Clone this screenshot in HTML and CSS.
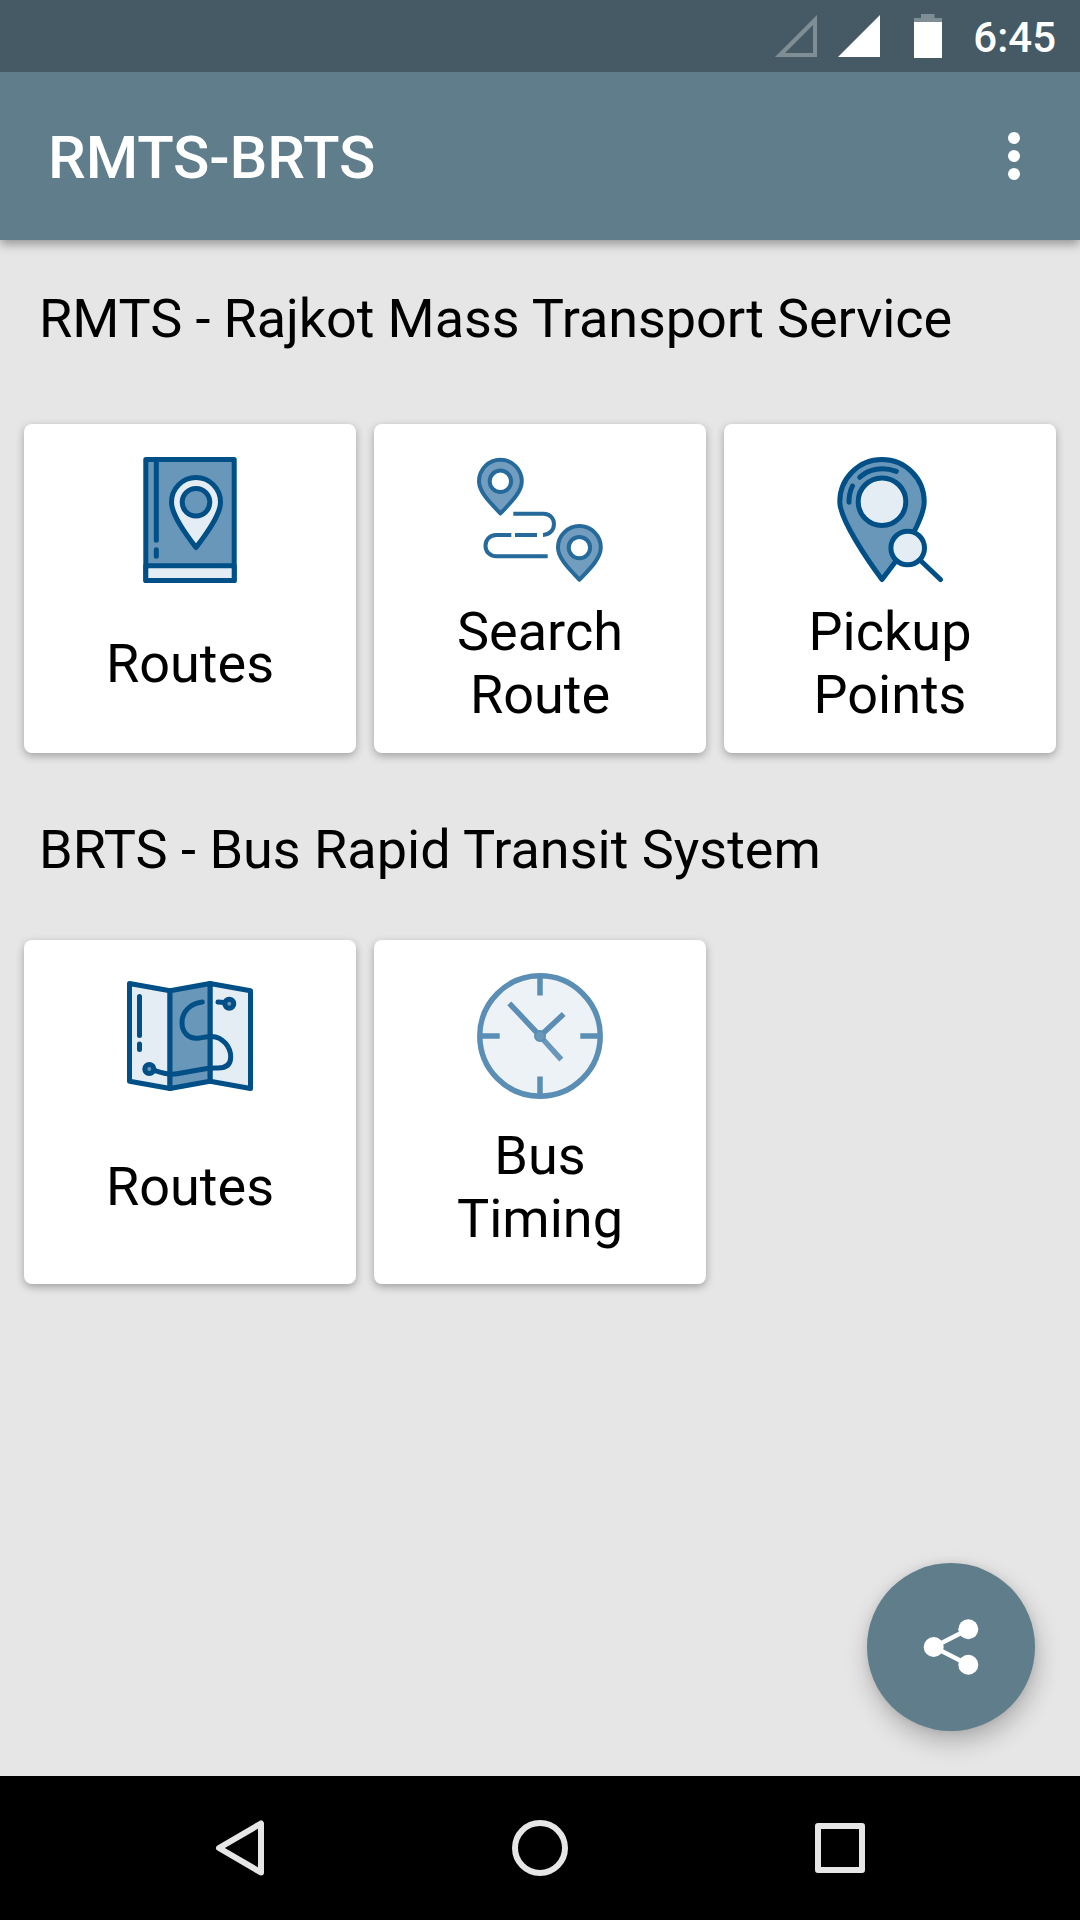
FILE: index.html
```html
<!DOCTYPE html>
<html lang="en">
<head>
    <meta charset="UTF-8">
    <meta name="viewport" content="width=device-width, initial-scale=1.0">
    <title>RMTS-BRTS</title>
    <link rel="stylesheet" href="styles.css">
</head>
<body>
    <div class="screen">
        <div class="status-bar">
            <svg class="signal" width="42" height="42" viewBox="0 0 42 42">
                <path d="M42 0V42H0ZM38 10L10 38H38Z" fill="#7f8e94" fill-rule="evenodd"/>
            </svg>
            <svg class="signal-full" width="42" height="42" viewBox="0 0 42 42">
                <path d="M42 0V42H0Z" fill="#fff"/>
            </svg>
            <svg class="battery" width="28" height="44" viewBox="0 0 28 44">
                <path d="M7 0H20.500V4H28V8H0V4H7Z" fill="#7f8e94"/>
                <path d="M0 8H28V44H0Z" fill="#fff"/>
            </svg>
            <span class="time">6:45</span>
        </div>

        <header class="app-bar">
            <h1>RMTS-BRTS</h1>
            <svg class="menu" width="12" height="48" viewBox="0 0 12 48">
                <g fill="#fff">
                    <circle cx="6" cy="6" r="6"/>
                    <circle cx="6" cy="24" r="6"/>
                    <circle cx="6" cy="42" r="6"/>
                </g>
            </svg>
        </header>

        <main class="content">
            <h2 class="rmts-title">RMTS - Rajkot Mass Transport Service</h2>
            <div class="cards rmts">
                <div class="card">
                    <!-- book with pin -->
                    <svg class="icon" viewBox="0 0 126 126" stroke="#004f87" stroke-width="5" stroke-linecap="round" stroke-linejoin="round">
                        <rect x="18.800" y="2.500" width="88.400" height="121" fill="#6997b9"/>
                        <rect x="18.800" y="108.700" width="88.400" height="14.800" fill="#e5edf4"/>
                        <path d="M29.300 3V83.200M29.300 92.800V99.200" fill="none"/>
                        <path d="M69 90.500C61 80 44.500 59 44.500 45.200A24.500 24.700 0 0 1 93.500 45.200C93.500 59 77 80 69 90.500Z" fill="#e5edf4"/>
                        <circle cx="69" cy="45.300" r="13.800" fill="#6997b9"/>
                    </svg>
                    <p>Routes</p>
                </div>
                <div class="card">
                    <!-- two pins joined by a road -->
                    <svg class="icon" viewBox="0 0 126 126" stroke="#256a9b" stroke-width="4" stroke-linejoin="round">
                        <path d="M23.400 56.500C17 49 2 36.500 2 24.200A21.400 21.400 0 0 1 44.800 24.200C44.800 36.500 30 49 23.400 56.500Z" fill="#739dbf"/>
                        <circle cx="23.400" cy="24.300" r="10.700" fill="#fff"/>
                        <path d="M102.400 122.800C96 115.300 81 102.800 81 90.500A21.400 21.400 0 0 1 123.800 90.500C123.800 102.800 109 115.300 102.400 122.800Z" fill="#739dbf"/>
                        <circle cx="102.400" cy="90.600" r="10.700" fill="#fff"/>
                        <path d="M36.300 56.700H66.500C80.500 56.700 80.500 77.500 66 78M60 78H38M34.300 78H19.500C4.800 78 4.800 99.300 19.500 99.300H70.700" fill="none"/>
                    </svg>
                    <p>Search<br>Route</p>
                </div>
                <div class="card">
                    <!-- pin with magnifier -->
                    <svg class="icon" viewBox="0 0 126 126" stroke="#004f87" stroke-width="5" stroke-linecap="round" stroke-linejoin="round">
                        <path d="M55 122.500C42 105 12.800 63 12.800 44.700A42.200 42.200 0 0 1 97.200 44.700C97.200 52 93.500 62 88 73L69 104Z" fill="#6997b9"/>
                        <circle cx="55" cy="44.700" r="23.800" fill="#e5edf4"/>
                        <path d="M32.700 20.300C42 11.500 56 9.500 69.300 14.300M25.500 29C23 34 21.900 39.500 22 45.200" fill="none"/>
                        <path d="M94 104L113.500 122.500" fill="none"/>
                        <circle cx="80.700" cy="91" r="16.800" fill="#e5edf4"/>
                    </svg>
                    <p>Pickup<br>Points</p>
                </div>
            </div>

            <h2>BRTS - Bus Rapid Transit System</h2>
            <div class="cards brts">
                <div class="card">
                    <!-- folded map -->
                    <svg class="icon" viewBox="0 0 126 126" stroke="#004f87" stroke-width="5" stroke-linecap="round" stroke-linejoin="round">
                        <path d="M2.500 10.500L43 17.700V115.500L2.500 108.300Z" fill="#e5edf4"/>
                        <path d="M83 10.500L123.500 17.700V115.500L83 108.300Z" fill="#e5edf4"/>
                        <path d="M43 17.700L83 10.500V108.300L43 115.500Z" fill="#6997b9"/>
                        <path d="M12.500 23.500V62.500M12.500 71V76.500" fill="none"/>
                        <path d="M75.300 29C63 30.500 55 39 55 49.500C55 59.500 61.500 66 71 65.200C76 64.800 79 63.300 84.500 63.500C96 64 103.700 74 103.700 84C103.700 91.500 99 95 91 95C87 95 85 94.700 80 95.500L50 100.800C42 102.200 36 100.500 28 97.700" fill="none"/>
                        <path d="M91 29L97 29.500" fill="none"/>
                        <circle cx="22.300" cy="96" r="4.500" fill="#6997b9"/>
                        <circle cx="102.300" cy="30.700" r="4.500" fill="#6997b9"/>
                    </svg>
                    <p>Routes</p>
                </div>
                <div class="card">
                    <!-- clock -->
                    <svg class="icon" viewBox="0 0 126 126" stroke="#5a8eb4" stroke-width="5.500" fill="none">
                        <circle cx="63" cy="63" r="60.200" fill="#edf2f7"/>
                        <path d="M63 3V22.500M63 103.500V123M3 63H22.700M103.300 63H123"/>
                        <path d="M32.300 30.300L63 63L86.700 41"/>
                        <path d="M63 63L84.300 86.700" stroke="#6997b9"/>
                        <circle cx="63" cy="63" r="5" fill="#6997b9" stroke-width="2"/>
                    </svg>
                    <p>Bus<br>Timing</p>
                </div>
            </div>

            <button class="fab" type="button" aria-label="Share">
                <svg width="56" height="56" viewBox="-28 -28 56 56">
                    <path d="M17.500 -17.700L-17.300 0L17.500 17.700" fill="none" stroke="#fff" stroke-width="4.500"/>
                    <g fill="#fff">
                        <circle cx="-17.300" cy="0" r="10"/>
                        <circle cx="17.300" cy="-17.700" r="10"/>
                        <circle cx="17.300" cy="17.700" r="10"/>
                    </g>
                </svg>
            </button>
        </main>

        <nav class="nav-bar">
            <svg width="56" height="56" viewBox="0 0 56 56">
                <path d="M49 3.500V52.500L7 28Z"/>
            </svg>
            <svg width="56" height="56" viewBox="0 0 56 56">
                <circle cx="28" cy="28" r="25"/>
            </svg>
            <svg width="56" height="56" viewBox="0 0 56 56">
                <rect x="6" y="6" width="44" height="44"/>
            </svg>
        </nav>
    </div>
</body>
</html>
```
FILE: styles.css
```css
* {
    box-sizing: border-box;
    margin: 0;
    padding: 0;
}

body {
    font-family: Roboto, sans-serif;
    background-color: #e6e6e6;
    color: #000;
}

svg {
    display: block;
    flex: none;
}

.screen {
    width: 1080px;
    height: 1920px;
    display: flex;
    flex-direction: column;
    overflow: hidden;
}

.status-bar {
    position: relative;
    z-index: 1;
    height: 72px;
    background-color: #455a64;
    display: flex;
    align-items: center;
    justify-content: flex-end;
    padding-right: 24px;
}

.signal {
    margin-right: 21px;
}

.signal-full {
    margin-right: 34px;
}

.battery {
    margin-right: 31px;
}

.time {
    color: #fff;
    font-size: 42px;
    font-weight: 500;
    line-height: 50px;
    padding-top: 4px;
}

.app-bar {
    height: 168px;
    background-color: #607d8b;
    display: flex;
    align-items: center;
    justify-content: space-between;
    padding: 0 60px 0 48px;
    box-shadow: 0 4px 10px rgba(0, 0, 0, 0.36);
}

.app-bar h1 {
    color: #fff;
    font-size: 60px;
    font-weight: 500;
    line-height: 70px;
    letter-spacing: -0.12px;
    padding-top: 4px;
}

.content {
    position: relative;
    flex: 1;
    padding: 47px 24px 0;
}

.content h2 {
    font-size: 54px;
    font-weight: 400;
    line-height: 63px;
    padding-left: 15px;
}

.content .rmts-title {
    letter-spacing: -0.1px;
}

.cards {
    display: flex;
    gap: 18px;
}

.rmts {
    height: 329px;
    margin: 74px 0 65px;
}

.brts {
    height: 344px;
    margin-top: 59px;
}

.card {
    width: 332px;
    display: flex;
    flex-direction: column;
    align-items: center;
    padding: 33px 0 10px;
    background-color: #fff;
    border-radius: 8px;
    box-shadow: 0 3px 9px rgba(0, 0, 0, 0.3);
}

.icon {
    width: 126px;
    height: 126px;
}

.card p {
    flex: 1;
    display: flex;
    align-items: center;
    font-size: 54px;
    line-height: 63px;
    text-align: center;
}

.fab {
    position: absolute;
    right: 45px;
    bottom: 45px;
    width: 168px;
    height: 168px;
    display: flex;
    align-items: center;
    justify-content: center;
    border: none;
    border-radius: 50%;
    background-color: #607d8b;
    box-shadow: 2px 11px 24px rgba(0, 0, 0, 0.24), 0 0 8px rgba(0, 0, 0, 0.08);
}

.nav-bar {
    height: 144px;
    background-color: #000;
    display: flex;
    align-items: center;
    justify-content: center;
    gap: 244px;
}

.nav-bar svg {
    fill: none;
    stroke: #e6e6e6;
    stroke-width: 6;
    stroke-linejoin: round;
}
```
